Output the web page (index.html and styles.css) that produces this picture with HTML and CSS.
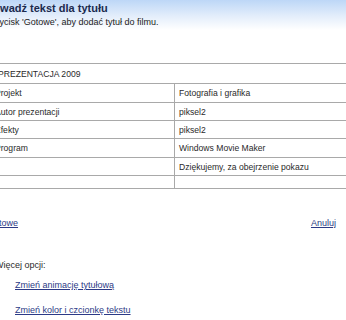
FILE: index.html
```html
<!doctype html>
<html>
<head>
  <meta content="text/html;charset=utf-8" http-equiv="Content-Type">
  <title>Tytuł filmu</title>
  <link rel="stylesheet" href="styles.css">
</head>
<body>
  <div class="wizard">
  <div class="head">
    <h1>Wprowadź tekst dla tytułu</h1>
    <p>Naciśnij przycisk 'Gotowe', aby dodać tytuł do filmu.</p>
  </div>

  <table class="credits">
    <tr class="top"><td colspan="2">PREZENTACJA 2009</td></tr>
    <tr class="r19"><td>Projekt</td><td>Fotografia i grafika</td></tr>
    <tr><td>Autor prezentacji</td><td>piksel2</td></tr>
    <tr><td>Efekty</td><td>piksel2</td></tr>
    <tr class="r19"><td>Program</td><td>Windows Movie Maker</td></tr>
    <tr><td></td><td>Dziękujemy, za obejrzenie pokazu</td></tr>
    <tr class="last"><td></td><td></td></tr>
  </table>

  <div class="actions">
    <a href="#" class="done">Gotowe</a>
    <a href="#">Anuluj</a>
  </div>

  <div class="more">
    <p>Więcej opcji:</p>
    <ul>
      <li><a href="#">Zmień animację tytułową</a></li>
      <li><a href="#">Zmień kolor i czcionkę tekstu</a></li>
    </ul>
  </div>
  </div>
</body>
</html>
```

FILE: styles.css
```css
html, body {
  margin: 0;
  overflow: hidden;
  background: #fff;
}
body {
  font-family: "Liberation Sans", Arial, sans-serif;
  color: #2b2b2b;
}
.wizard {
  margin-left: -45px;
  width: 391px;
}
.head {
  background: linear-gradient(#bdd7f7, #e4eefb 55%, #fff 100%);
  background-size: 100% 30px;
  background-repeat: no-repeat;
  padding-top: 1px;
  height: 62px;
}
.head h1 {
  margin: 0;
  padding-left: 17px;
  font-size: 11px;
  line-height: 14px;
  font-weight: bold;
  color: #1b2a4e;
}
.head p {
  margin: 1px 0 0 -2px;
  font-size: 9px;
  line-height: 12px;
  color: #222;
}
.credits {
  margin-left: 35px;
  width: 360px;
  border-collapse: collapse;
  font-size: 8.6px;
  color: #2a2a2a;
}
.credits td {
  height: 17px;
  padding: 0 0 0 5px;
  border-top: 1px solid #a9a9a9;
  vertical-align: middle;
  white-space: nowrap;
}
.credits td + td {
  border-left: 1px solid #a9a9a9;
  padding-left: 4px;
}
.credits td:first-child { width: 179px; }
.credits .top td { height: 19px; padding-left: 8px; }
.credits .r19 td { height: 18px; }
.credits .last td { height: 12px; border-bottom: 1px solid #a9a9a9; }

a { color: #2c3a86; }
.actions {
  display: flex;
  justify-content: space-between;
  margin: 28px 10px 0 32px;
  font-size: 9px;
  line-height: 12px;
}
.more {
  margin-top: 30px;
  font-size: 9px;
  line-height: 12px;
}
.more p {
  margin: 0 0 0 40px;
  color: #2b2b2b;
}
.more ul {
  list-style: none;
  margin: 8px 0 0;
  padding: 0 0 0 60px;
  display: flex;
  flex-direction: column;
  gap: 13px;
}
```
